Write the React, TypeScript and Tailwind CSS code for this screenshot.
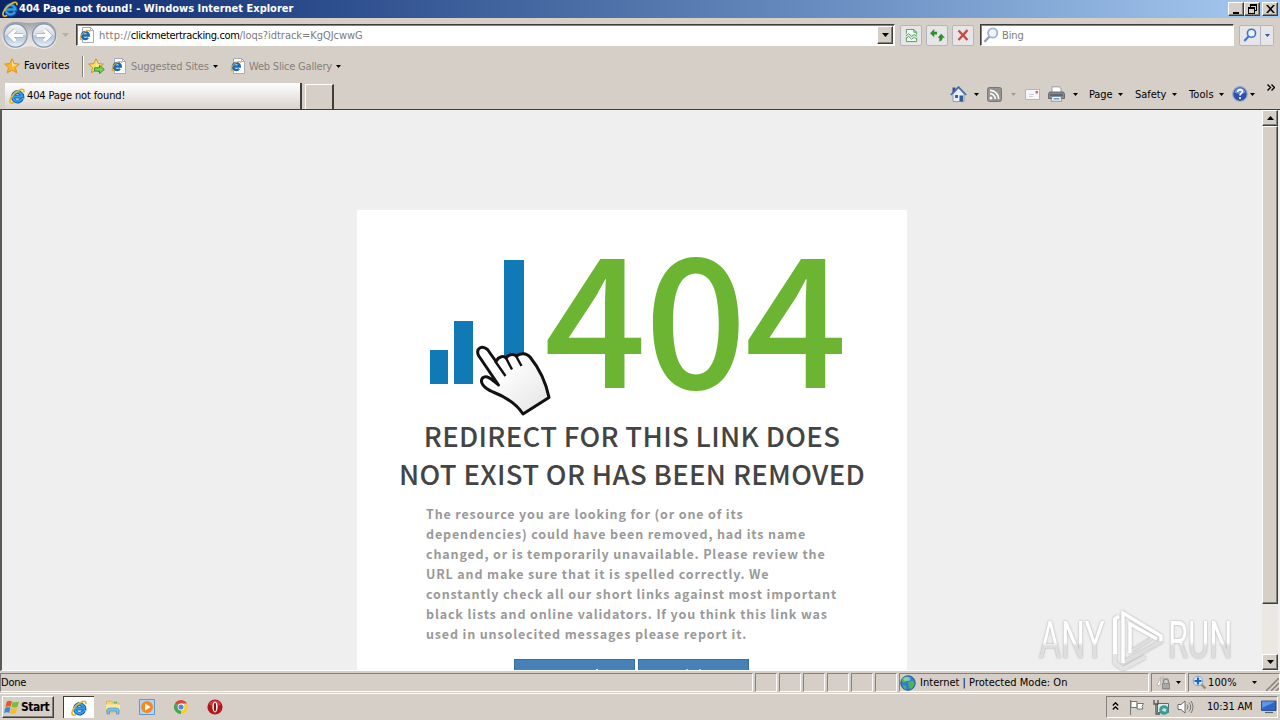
import type { ReactNode } from 'react'
import clsx from 'clsx'

const UI_FONT = "font-['DejaVu_Sans_Condensed','DejaVu_Sans',sans-serif]"
const PAGE_FONT = "font-['Noto_Sans_CJK_SC',sans-serif]"

const SUNKEN = 'border border-t-[#85807a] border-l-[#85807a] border-b-white border-r-white'
const RAISED =
  'border border-t-white border-l-white border-b-[#403d3a] border-r-[#403d3a] shadow-[inset_-1px_-1px_0_#85807a]'
const FIELD =
  'border border-t-[#403d3a] border-l-[#403d3a] border-r-white border-b-white bg-white shadow-[inset_1px_1px_0_#85807a]'

/* ---------- icons ---------- */

function IELogo({ size = 16 }: { size?: number }) {
  return (
    <svg width={size} height={size} viewBox="0 0 16 16" className="shrink-0" fill="none">
      <path d="M13 10.800A4.800 4.800 0 1 1 13.400 8.600H4.800" stroke="#1262b0" strokeWidth="3.800" />
      <path d="M12.800 10.600A4.700 4.700 0 1 1 13.200 8.400H5" stroke="#36a0e8" strokeWidth="2" />
      <path d="M14.800 4.200C15.600 1.200 13.200.600 9.600 2.400 4.600 5 .200 11 1 13.800c.4 1.600 2 1.600 4.200.6" stroke="#e6b828" strokeWidth="1.700" />
    </svg>
  )
}

function IEPage() {
  return (
    <svg width="16" height="16" viewBox="0 0 16 16" className="shrink-0" fill="none">
      <path d="M3.500.500h8l3 3v12h-11z" fill="#fff" stroke="#a5acb8" />
      <path d="M11.500.500v3h3" stroke="#a5acb8" />
      <path d="M9 10.800A3.500 3.500 0 1 1 9.800 8.500H3.400" stroke="#1768b8" strokeWidth="2.400" />
      <path d="M10.800 5C11 3 8.600 3.200 6.400 4.400 3 6.400.600 10 1.200 12c.3 1 1.500 1 2.800.4" stroke="#dca928" strokeWidth="1.100" />
    </svg>
  )
}

function NavButtons() {
  return (
    <svg width="58" height="29" viewBox="0 0 58 29" className="shrink-0">
      <defs>
        <linearGradient id="nav" x1="0" y1="0" x2="0" y2="1">
          <stop offset="0" stopColor="#f4f6f8" />
          <stop offset=".48" stopColor="#d5dce5" />
          <stop offset=".52" stopColor="#b3c2d4" />
          <stop offset="1" stopColor="#e6f4fc" />
        </linearGradient>
        <linearGradient id="navPlate" x1="0" y1="0" x2="0" y2="1">
          <stop offset="0" stopColor="#9c9ca8" />
          <stop offset=".5" stopColor="#dad8d8" />
          <stop offset="1" stopColor="#efedeb" />
        </linearGradient>
      </defs>
      <path d="M14 1C20 1 22 2 29 2S38 1 43 1a13.200 13.200 0 0 1 0 27c-6 0-8-3-14-3s-9 3-15 3A13.200 13.200 0 0 1 14 1z" fill="url(#navPlate)" />
      <circle cx="14.500" cy="14.500" r="11.600" fill="url(#nav)" stroke="#8793a8" strokeWidth="1.200" />
      <circle cx="43" cy="14.500" r="11.600" fill="url(#nav)" stroke="#8793a8" strokeWidth="1.200" />
      <path d="M22 14.500H9m5.500-5.500L8.800 14.500l5.700 5.500" fill="none" stroke="#a3b2c8" strokeWidth="4.600" />
      <path d="M22 14.500H9m5.500-5.500L8.800 14.500l5.700 5.500" fill="none" stroke="#fff" strokeWidth="3.200" />
      <path d="M35.500 14.500h13m-5.500-5.500 5.700 5.500-5.700 5.500" fill="none" stroke="#a3b2c8" strokeWidth="4.600" />
      <path d="M35.500 14.500h13m-5.500-5.500 5.700 5.500-5.700 5.500" fill="none" stroke="#fff" strokeWidth="3.200" />
    </svg>
  )
}

function Caret({ className = 'text-black', w = 5 }: { className?: string; w?: number }) {
  return (
    <svg width={w} height={(w + 1) / 2} viewBox="0 0 10 6" preserveAspectRatio="none" className={clsx('shrink-0', className)}>
      <path d="M0 0h10L5 6z" fill="currentColor" />
    </svg>
  )
}

function Star({ add = false }: { add?: boolean }) {
  return (
    <svg width="17" height="16" viewBox="0 0 17 16" className="shrink-0">
      <path
        d="M8 .8l2.200 4.800 5.200.5-3.900 3.500 1.200 5.200L8 12.100l-4.700 2.700 1.200-5.200L.6 6.100l5.200-.5z"
        fill={add ? '#f9dc62' : '#fcb62c'}
        stroke={add ? '#c99720' : '#dc9226'}
        strokeWidth="1"
      />
      <path d="M8 2.500l1.500 3.800 3.500.4-5 2z" fill="#ffe9a0" />
      {add && <path d="M6.500 9.800h5V7.300l4.800 4.200-4.800 4.100v-2.500h-5z" fill="#7cd254" stroke="#2f8a25" strokeWidth=".9" />}
    </svg>
  )
}

function Magnifier({ color, handle = color, size = 16 }: { color: string; handle?: string; size?: number }) {
  return (
    <svg width={size} height={size} viewBox="0 0 16 16" className="shrink-0" fill="none">
      <path d="M6.500 9.500 1.500 14.800" stroke={handle} strokeWidth="2.400" />
      <circle cx="9.700" cy="6" r="4.600" fill="#eef5fd" stroke={color} strokeWidth="1.900" />
    </svg>
  )
}

function CompatIcon() {
  return (
    <svg width="13" height="15" viewBox="0 0 14 16" fill="none" stroke="#4aa052">
      <path d="M1.500 6V1.500h8l3 3V7M9.500 1.500v3h3M1.500 10v4.500h11V11" fill="#f1faf0" />
      <path d="M1 8.500l3-2.500 3 3 3-2 3 2M1 11.500l3-2.500 3 3 3-2 3 2" />
    </svg>
  )
}

function RefreshIcon() {
  return (
    <svg width="15" height="13" viewBox="0 0 16 14" fill="#2f8f2b">
      <path d="M4.500 0 0 4.500 4.500 9V6h3V3h-3z" />
      <path d="M12 5l4 4.500h-2.500c0 2-1 3.500-3.500 4V9.500H8z" />
    </svg>
  )
}

function HomeIcon() {
  return (
    <svg width="17" height="17" viewBox="0 0 17 17">
      <path d="M2.500 1.500h3v5h-3z" fill="#3c4f8c" />
      <path d="M3 8l5.500-6L14 8v7.500H3z" fill="#e6effb" stroke="#7d90b5" strokeWidth=".8" />
      <path d="M.8 9 8.500 1l7.700 8" fill="none" stroke="#4468a8" strokeWidth="1.600" />
      <path d="M9.500 9.500h3.600v6H9.500z" fill="#2e5d95" />
      <path d="M5 9h3v3H5z" fill="#45618c" />
    </svg>
  )
}

function RssIcon() {
  return (
    <svg width="15" height="15" viewBox="0 0 15 15">
      <rect x=".5" y=".5" width="14" height="14" rx="2" fill="#969492" stroke="#777" />
      <circle cx="4" cy="11" r="1.500" fill="#fff" />
      <path d="M3 6.700A5.300 5.300 0 0 1 8.300 12M3 3.300A8.700 8.700 0 0 1 11.700 12" fill="none" stroke="#fff" strokeWidth="1.700" />
    </svg>
  )
}

function MailIcon() {
  return (
    <svg width="15" height="11" viewBox="0 0 15 11">
      <path d="M.5.500h14v10H.5z" fill="#f7f7f9" stroke="#b3b3b8" />
      <path d="M10.500 2h2.500v2.500h-2.500z" fill="#d06a60" />
      <path d="M4 5.500h5M4 7.500h4" stroke="#c2c4cf" strokeWidth=".8" />
    </svg>
  )
}

function PrinterIcon() {
  return (
    <svg width="17" height="16" viewBox="0 0 17 16">
      <path d="M4 .8h7.500l1.500 2V7H4z" fill="#fff" stroke="#888" strokeWidth=".8" />
      <path d="M1.500 6h14l1 2v4.500h-16V8z" fill="#868b92" stroke="#555a62" strokeWidth=".8" />
      <path d="M2 9h13" stroke="#3d4148" />
      <path d="M4 10.500h9l.8 4.700H3.200z" fill="#f0f6ff" stroke="#777" strokeWidth=".7" />
      <path d="M5.500 12h6v1.500h-6z" fill="#5aa0da" />
    </svg>
  )
}

function HelpIcon() {
  return (
    <svg width="16" height="16" viewBox="0 0 16 16">
      <circle cx="8" cy="8" r="7.300" fill="#2c51ad" stroke="#9aa8cc" strokeWidth="1.200" />
      <path d="M2.500 6.500a5.600 5.600 0 0 1 11 0c-3 1.700-8 1.700-11 0z" fill="#6e92dc" />
      <path d="M5.600 6c.2-3.200 5-2.900 4.800-.2C10.300 7.400 8 7.600 8 9.500" fill="none" stroke="#fff" strokeWidth="1.700" />
      <circle cx="8" cy="12" r="1.100" fill="#fff" />
    </svg>
  )
}

function GlobeIcon() {
  return (
    <svg width="16" height="16" viewBox="0 0 16 16">
      <circle cx="8" cy="8" r="7.300" fill="#2f7fd0" stroke="#1b4f87" strokeWidth=".8" />
      <path d="M2.500 3.500C5 .8 8 1 9 2.500 8.500 5 6 5 5.500 7.500 4 8 2 7 1.500 6zM8.500 7c3-1.500 5-1 6 .5 0 3-2 5.500-4 6.500-1.500-1.500-2.500-4-2-7zM3 10l3 1v3.500C4 14 3 12 3 10z" fill="#4fb749" />
      <ellipse cx="7" cy="4" rx="3.600" ry="2" fill="#bfe3f8" opacity=".55" />
    </svg>
  )
}

function WindowsFlag() {
  return (
    <svg width="16" height="15" viewBox="0 0 16 15" className="shrink-0">
      <path d="M2.800 1.600C4.800.4 6.300.6 8 1.400L6.700 6.700C5 6 3.500 6 1.400 7z" fill="#e4592a" />
      <path d="M8.800 1.700c2 .9 3.900.8 6.200-.2l-1.500 5.400c-2 1-4 .9-6 .1z" fill="#7dbb3a" />
      <path d="M1.200 7.900c2-1.100 3.600-1 5.300-.2l-1.300 5.200c-1.800-.8-3.400-.7-5.200.3z" fill="#3f87d3" />
      <path d="M7.300 8c2 .9 3.900.8 6-.2l-1.500 5.500c-2 1-4 .8-5.900 0z" fill="#f5bf2b" />
    </svg>
  )
}

function FolderIcon() {
  return (
    <svg width="16" height="16" viewBox="0 0 16 16">
      <path d="M1.500 2h5l1.500 2h6v9h-12.500z" fill="#efd67c" stroke="#d1ae51" strokeWidth=".8" />
      <path d="M9 2.500h3v2H9z" fill="#6cbf6c" />
      <path d="M1 5.500h14v5H1z" fill="#fae9a5" />
      <path d="M2 15v-3.500Q2 9 4.500 9h7Q14 9 14 11.500V15h-2.500v-3h-7v3z" fill="#7ec0ea" stroke="#4b94c6" strokeWidth=".7" />
    </svg>
  )
}

function MediaIcon() {
  return (
    <svg width="16" height="16" viewBox="0 0 16 16">
      <path d="M.5.500h15v15H.5z" fill="#b4d5f2" stroke="#6099d0" />
      <circle cx="8" cy="8" r="6" fill="#f58a1f" />
      <path d="M6.200 4.500 11.500 8l-5.300 3.500z" fill="#fff" />
    </svg>
  )
}

function ChromeIcon() {
  return (
    <svg width="16" height="16" viewBox="0 0 16 16">
      <path d="M8 8 1.900 4.500A7 7 0 0 1 14.100 4.500H8z" fill="#e0443a" />
      <path d="M8 8 14.100 4.500A7 7 0 0 1 8 15z" fill="#fbcb34" />
      <path d="M8 8v7A7 7 0 0 1 1.900 4.500z" fill="#46a650" />
      <circle cx="8" cy="8" r="3.400" fill="#fff" />
      <circle cx="8" cy="8" r="2.600" fill="#4a87ea" />
    </svg>
  )
}

function OperaIcon() {
  return (
    <svg width="16" height="16" viewBox="0 0 16 16">
      <circle cx="8" cy="8" r="7.600" fill="#b3161b" />
      <path d="M2 5.500a6.500 6.500 0 0 1 12 0c-4 2-8 2-12 0z" fill="#cf3f40" />
      <ellipse cx="8" cy="8" rx="2.600" ry="5.400" fill="#fff" />
      <ellipse cx="8" cy="8" rx="1.100" ry="4.500" fill="#8d0d12" />
    </svg>
  )
}

/* ---------- browser chrome ---------- */

function CaptionButton({ children }: { children: ReactNode }) {
  return (
    <div className={clsx('flex h-[14px] w-4 items-center justify-center bg-[#d6cfc8]', RAISED)}>
      <svg width="13" height="12" viewBox="0 0 13 12">
        {children}
      </svg>
    </div>
  )
}

function TitleBar() {
  return (
    <div className="flex h-[18px] items-center bg-linear-to-r from-[#0a246a] to-[#a6caf0] pr-[2px] pl-[2px]">
      <IELogo />
      <span className="mt-px ml-[1px] text-[11px] font-bold tracking-[0px] whitespace-nowrap text-white">
        404 Page not found! - Windows Internet Explorer
      </span>
      <div className="ml-auto flex">
        <CaptionButton>
          <path d="M3 9h6v2H3z" />
        </CaptionButton>
        <CaptionButton>
          <path d="M4 1h7v7H9V7h1V3H5v1H4zM2 4h7v7H2zm1 2v4h5V6z" fillRule="evenodd" />
        </CaptionButton>
        <div className="w-[2px]" />
        <CaptionButton>
          <path d="M2 2h2l2.500 2.700L9 2h2L7.500 6l3.500 4H9L6.500 7.300 4 10H2l3.500-4z" />
        </CaptionButton>
      </div>
    </div>
  )
}

function ToolButton({ children, className = 'w-[22px] rounded-[2px] border' }: { children: ReactNode; className?: string }) {
  return (
    <div className={clsx('flex h-[21px] shrink-0 items-center justify-center border-[#b4b6bf] bg-[#e6e5e7]', className)}>
      {children}
    </div>
  )
}

function AddressRow() {
  return (
    <div className="flex h-[34px] items-center pl-[1px]">
      <NavButtons />
      <Caret className="ml-[3px] text-[#b5afa9]" w={7} />
      <div className={clsx('ml-[7px] flex h-[22px] w-[819px] items-center pl-[2px]', FIELD)}>
        <IEPage />
        <span className="mt-[2px] ml-[4px] text-[11px] whitespace-nowrap text-[#7b7b7b]">
          <span className="tracking-[0.2px]">http://</span>
          <span className="tracking-[-0.36px] text-black">clickmetertracking.com</span>
          <span className="tracking-[-0.04px]">/loqs?idtrack=KgQJcwwG</span>
        </span>
        <div className={clsx('mr-[1px] ml-auto flex h-[18px] w-4 items-center justify-center bg-[#d6cfc8]', RAISED)}>
          <Caret w={7} />
        </div>
      </div>
      <div className="ml-[5px] flex gap-[4px]">
        <ToolButton>
          <CompatIcon />
        </ToolButton>
        <ToolButton>
          <RefreshIcon />
        </ToolButton>
        <ToolButton>
          <svg width="12" height="12" viewBox="0 0 12 12">
            <path d="M1.500 1.500l9 9.500M10.500 1 1.500 11" stroke="#cf4743" strokeWidth="2.400" />
          </svg>
        </ToolButton>
      </div>
      <div className={clsx('ml-[6px] flex h-[22px] w-[254px] items-center pl-[2px]', FIELD)}>
        <Magnifier color="#a3b5cd" handle="#9a9da5" />
        <span className="mt-[2px] ml-[3px] text-[11px] tracking-[-0.1px] text-[#7b7b7b]">Bing</span>
      </div>
      <ToolButton className="ml-[5px] w-[22px] rounded-l-[2px] border">
        <Magnifier color="#3d72d6" size={14} />
      </ToolButton>
      <ToolButton className="w-[13px] rounded-r-[2px] border border-l-0">
        <Caret className="text-[#2858b8]" />
      </ToolButton>
    </div>
  )
}

function FavoritesRow() {
  return (
    <div className="flex h-[28px] items-center pl-[4px] text-[11px] whitespace-nowrap">
      <Star />
      <span className="mt-px ml-[3px] w-[56px] tracking-[0.1px]">Favorites</span>
      <div className="ml-[2px] h-[21px] w-[2px] border-r border-l border-r-white border-l-[#85807a]" />
      <div className="w-[4px]" />
      <Star add />
      <div className="w-[6px]" />
      <IEPage />
      <span className="mt-[2px] ml-[4px] w-[78px] tracking-[-0.15px] text-[#858079]">Suggested Sites</span>
      <Caret className="mt-px ml-[4px] text-black" />
      <div className="w-[12px]" />
      <IEPage />
      <span className="mt-[2px] ml-[3px] w-[83px] tracking-[-0.2px] text-[#858079]">Web Slice Gallery</span>
      <Caret className="mt-px ml-[4px] text-black" />
    </div>
  )
}

function TabRow() {
  return (
    <div className="flex h-[29px] pl-[5px] text-[11px] whitespace-nowrap">
      <div className="mt-[3px] flex h-[26px] w-[297px] items-center border-r-2 border-r-[#403d3a] bg-linear-to-b from-white to-[#d9d3cc] pl-[4px]">
        <IELogo />
        <span className="mt-px ml-[2px] tracking-[-0.13px]">404 Page not found!</span>
      </div>
      <div className="mt-[4px] ml-[3px] h-[25px] w-[29px] border-t border-r-2 border-l border-t-white border-r-[#403d3a] border-l-white" />
      <div className="ml-auto flex h-[28px] items-center pr-[3px]">
        <HomeIcon />
        <Caret className="ml-[7px]" />
        <div className="w-[8px]" />
        <RssIcon />
        <Caret className="ml-[9px] text-[#a19b94]" />
        <div className="w-[9px]" />
        <MailIcon />
        <div className="w-[8px]" />
        <PrinterIcon />
        <Caret className="ml-[8px]" />
        <span className="mt-[3px] ml-[11px] w-[25px] tracking-[-0.1px]">Page</span>
        <Caret className="ml-[4px]" />
        <span className="mt-[3px] ml-[12px] w-[33px] tracking-[-0.05px]">Safety</span>
        <Caret className="ml-[4px]" />
        <span className="mt-[3px] ml-[12px] w-[25px] tracking-[0.1px]">Tools</span>
        <Caret className="ml-[5px]" />
        <div className="w-[8px]" />
        <HelpIcon />
        <Caret className="ml-[2px]" />
        <svg width="8" height="7" viewBox="0 0 8 7" className="mb-[13px] ml-[12px]" fill="none" stroke="#000" strokeWidth="1.400">
          <path d="M.5.500l3 3-3 3M4.500.500l3 3-3 3" />
        </svg>
        <div className="w-[2px]" />
      </div>
    </div>
  )
}

/* ---------- page ---------- */

function ClickLogo() {
  return (
    <svg width="122" height="158" viewBox="0 0 122 158" className="shrink-0">
      <defs>
        <linearGradient id="hand" x1="0" y1="0" x2="1" y2="1">
          <stop offset=".3" stopColor="#fff" />
          <stop offset="1" stopColor="#e4e4e4" />
        </linearGradient>
      </defs>
      <path d="M1 92h18v34H1zM25 63h19v63H25zM75 2h20v100H75z" fill="#0f7ab5" />
      <path
        d="M69.500 127 49.500 97.500C46.500 90 53 87 58.500 91.500l8.500 12c3-6 8-5.500 10-3.500 3-4 7-4.500 10.500-2 4-3.500 10-3 13.500 1C110 110 117 125 120 139.500L94 156C87 145 77 139 64 134c-10-4.500-13.500-10-10.500-14 4-3.500 9 1 16 7z"
        fill="url(#hand)"
        stroke="#111"
        strokeWidth="3"
        strokeLinejoin="round"
      />
      <path d="M66 103l10.500 15M77 100l6 11.500M87 98l5.500 10" stroke="#111" strokeWidth="2.400" fill="none" />
    </svg>
  )
}

function NotFoundCard() {
  return (
    <div className={clsx('mt-[100px] h-[460px] w-[550px] overflow-hidden bg-white', PAGE_FONT)}>
      <div className="flex h-[206px] pt-[48px] pl-[72px]">
        <ClickLogo />
        <span className="-mt-[28px] -ml-[7px] text-[180px] leading-[160px] font-medium tracking-[-2.2px] text-[#6bb533]">404</span>
      </div>
      <h1 className="text-center text-[27.5px] leading-[38px] font-medium tracking-[0.33px] whitespace-nowrap text-[#444]">
        REDIRECT FOR THIS LINK DOES
        <br />
        NOT EXIST OR HAS BEEN REMOVED
      </h1>
      <p className="mt-[12px] pl-[69px] text-[12.5px] leading-[20px] font-bold tracking-[0.85px] whitespace-nowrap text-[#999]">
        The resource you are looking for (or one of its
        <br />
        dependencies) could have been removed, had its name
        <br />
        changed, or is temporarily unavailable. Please review the
        <br />
        URL and make sure that it is spelled correctly. We
        <br />
        constantly check all our short links against most important
        <br />
        black lists and online validators. If you think this link was
        <br />
        used in unsolecited messages please report it.
      </p>
      <div className="mt-[15px] flex gap-[3px] pl-[157px]">
        <div className="flex h-[34px] w-[121px] border border-[#336fa5] bg-[#4681b7] pt-[9px] pl-[81px]">
          <div className="h-px w-[2px] bg-white/80" />
        </div>
        <div className="flex h-[34px] w-[111px] gap-[11px] border border-[#336fa5] bg-[#4681b7] pt-[9px] pl-[47px]">
          <div className="h-px w-[2px] bg-white/60" />
          <div className="h-px w-[2px] bg-white/60" />
        </div>
      </div>
    </div>
  )
}

function ScrollBar() {
  const button = clsx('flex h-[16px] w-[16px] shrink-0 items-center justify-center bg-[#d6cfc8]', RAISED)
  return (
    <div className="flex w-[16px] flex-col bg-[#ebe8e4]">
      <div className={button}>
        <Caret w={7} className="rotate-180" />
      </div>
      <div className={clsx('h-[478px] w-[16px] bg-[#d6cfc8]', RAISED)} />
      <div className={clsx(button, 'mt-auto')}>
        <Caret w={7} />
      </div>
    </div>
  )
}

function Viewport() {
  return (
    <div className="flex h-[562px] border-t-[1px] border-b-[1px] border-l-[2px] border-t-[#403d3a] border-b-white border-l-[#5c5854] bg-[#efefef] pr-[2px]">
      <div className="flex h-[560px] flex-1 overflow-hidden pl-[355px]">
        <NotFoundCard />
      </div>
      <ScrollBar />
    </div>
  )
}

function Watermark() {
  const word = 'inline-block origin-left bg-linear-to-b from-white from-52% to-[#dedede] to-58% bg-clip-text text-transparent'
  return (
    <div className="absolute top-[609px] left-[1039px] flex h-[64px] w-[200px] items-center font-['Roboto',sans-serif] text-[51px] leading-[64px] font-normal drop-shadow-[0_0_1px_#aaa]">
      <div className="w-[69px]">
        <span className={clsx(word, 'scale-x-[.66]')}>ANY</span>
      </div>
      <svg width="58" height="64" viewBox="0 0 58 64" fill="none" className="shrink-0">
        <path d="M14.500 54 54 32" stroke="#dedede" strokeWidth="4" />
        <path d="M22 43l24-15" stroke="#dedede" strokeWidth="3" />
        <path d="M7 45v9l8 6 22-12" stroke="#e4e4e4" strokeWidth="4" />
        <path d="M15 54V4l38 23v5M22 44V15l27 15" stroke="#fff" strokeWidth="3.500" />
        <path d="M7 45V10l4-3" stroke="#fff" strokeWidth="4" />
      </svg>
      <div className="ml-[2px] w-[64px]">
        <span className={clsx(word, 'scale-x-[.64]')}>RUN</span>
      </div>
    </div>
  )
}

/* ---------- bottom bars ---------- */

function StatusBar() {
  return (
    <div className="flex h-[23px] gap-[2px] border-b border-b-white pt-[2px] pb-[1px] text-[11px] whitespace-nowrap">
      <div className={clsx('flex w-[753px] items-center', SUNKEN)}>
        <span className="mt-[2px] tracking-[-0.2px]">Done</span>
      </div>
      {[0, 1, 2, 3, 4, 5].map((i) => (
        <div key={i} className={clsx('w-[22px]', SUNKEN)} />
      ))}
      <div className={clsx('flex w-[250px] items-center', SUNKEN)}>
        <GlobeIcon />
        <span className="mt-[2px] ml-[4px] tracking-[0.02px]">Internet | Protected Mode: On</span>
      </div>
      <div className={clsx('flex w-[35px] items-center pl-[4px]', SUNKEN)}>
        <svg width="16" height="14" viewBox="0 0 16 14">
          <path d="M5 1 1 9l3 1zM7 0v5" fill="#fff" stroke="#aaa" strokeWidth=".8" />
          <path d="M7.500 7.500V5.500a2.500 2.500 0 0 1 5 0v2" fill="none" stroke="#8c8c8c" strokeWidth="1.400" />
          <path d="M6 7h8v6.500H6z" fill="#8c8c8c" />
          <path d="M7 9h6M7 11h6" stroke="#ddd" strokeWidth=".7" />
        </svg>
        <Caret className="ml-[4px]" />
      </div>
      <div className={clsx('flex w-[92px] items-center pl-[3px]', SUNKEN)}>
        <svg width="15" height="15" viewBox="0 0 15 15">
          <path d="M9 9l4.500 4.500" stroke="#a08b6c" strokeWidth="2.400" />
          <circle cx="6" cy="6" r="4.800" fill="#d6ebfb" stroke="#87a6c8" />
          <path d="M6 2.500v7M2.500 6h7" stroke="#1d63c4" strokeWidth="2.200" />
        </svg>
        <span className="mt-[2px] ml-[1px] w-[31px] tracking-[0.1px]">100%</span>
        <Caret className="ml-[13px]" />
        <svg width="13" height="13" viewBox="0 0 13 13" className="mt-auto ml-[9px] shrink-0" stroke="#85807a" strokeWidth="1.500">
          <path d="M0 13 13 0M5 13l8-8M10 13l3-3" />
        </svg>
      </div>
    </div>
  )
}

function Taskbar() {
  return (
    <div className="flex h-[26px] items-start pt-[2px] pl-[2px] text-[11px] whitespace-nowrap">
      <div className={clsx('flex h-[22px] w-[52px] items-center pl-[1px]', RAISED)}>
        <WindowsFlag />
        <span className="ml-[1px] text-[12px] font-bold tracking-[-0.5px]">Start</span>
      </div>
      <div className="ml-[9px] flex h-[22px] w-[31px] items-center justify-center border-t border-l border-[#403d3a] bg-white">
        <IELogo />
      </div>
      <div className="mt-[3px] ml-[11px] flex gap-[18px]">
        <FolderIcon />
        <MediaIcon />
        <ChromeIcon />
        <OperaIcon />
      </div>
      <div className={clsx('mr-[2px] ml-auto flex h-[22px] w-[172px] items-center pl-[5px]', SUNKEN)}>
        <svg width="7" height="8" viewBox="0 0 7 8" className="mb-[2px]" fill="none" stroke="#000" strokeWidth="1.300">
          <path d="M.8 3.500l2.700-2.700 2.700 2.700M.8 7.500l2.700-2.700 2.700 2.700" />
        </svg>
        <svg width="16" height="16" viewBox="0 0 16 16" className="ml-[10px]" fill="#fff" stroke="#777">
          <path d="M1.500 1v15M2 2.500h6v6H2zM8 4.500h6.500l-1.500 3 1 2.500H8z" />
        </svg>
        <svg width="17" height="17" viewBox="0 0 17 17" className="ml-[8px]" fill="none">
          <path d="M4.500 4.500h11v9h-11z" fill="#d7eceb" stroke="#5c6b6b" />
          <path d="M1 1v4h4V1M3 5v10h4" stroke="#555" strokeWidth="1.300" />
          <circle cx="11" cy="11" r="4.800" fill="#3d9c97" />
          <path d="M8.500 11.500l2-2.500 3 1-1 3z" fill="#bde6da" />
        </svg>
        <svg width="17" height="16" viewBox="0 0 17 16" className="ml-[7px]" fill="none">
          <path d="M1 5.500h3L8 2v12l-4-3.500H1z" fill="#fff" stroke="#6b6b6b" />
          <path d="M10 5.500q2 2.500 0 5M12 3.500q3.500 4.500 0 9M14 2q4 6 0 12" stroke="#777" />
        </svg>
        <span className="mt-px ml-[13px] w-[48px] tracking-[-0.2px]">10:31 AM</span>
        <svg width="16" height="14" viewBox="0 0 16 14" className="ml-[6px] shrink-0">
          <path d="M.5 1h14.500v9.500H.5z" fill="#2d66c4" stroke="#1c3f86" strokeWidth=".8" />
          <path d="M1 1.500h13.500L1 8z" fill="#5d96e8" />
          <path d="M4 12.500h8" stroke="#566" strokeWidth="1.200" />
        </svg>
      </div>
    </div>
  )
}

export default function App() {
  return (
    <div className={clsx('relative h-[720px] w-[1280px] overflow-hidden bg-[#d6cfc8] text-black', UI_FONT)}>
      <TitleBar />
      <AddressRow />
      <FavoritesRow />
      <TabRow />
      <Viewport />
      <StatusBar />
      <Taskbar />
      <Watermark />
    </div>
  )
}
